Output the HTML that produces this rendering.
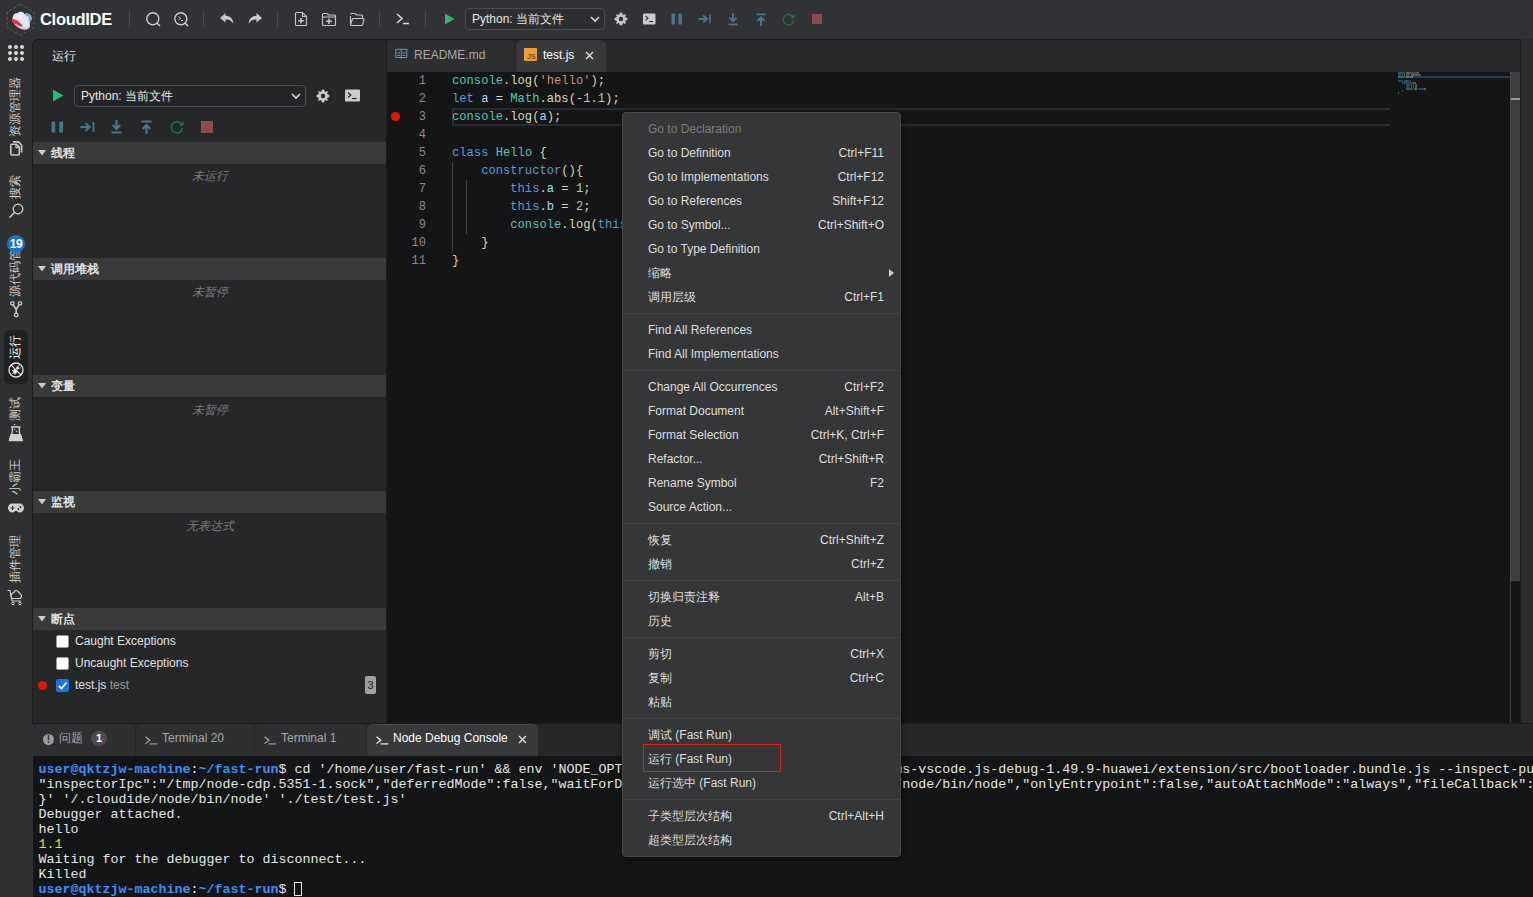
<!DOCTYPE html>
<html><head><meta charset="utf-8">
<style>
*{box-sizing:border-box;margin:0;padding:0}
html,body{width:1533px;height:897px;overflow:hidden;background:#313235;font-family:"Liberation Sans",sans-serif;color:#d0d0d0}
.a{position:absolute}
.ico{position:absolute;display:block}
.sep{position:absolute;top:11px;width:1px;height:16px;background:#4a4b4e}
.rot{position:absolute;font-size:12px;line-height:12px;white-space:nowrap;color:#cfcfcf;transform:translate(-50%,-50%) rotate(-90deg)}
.sh{position:absolute;left:33px;width:353px;height:22px;background:#393a3c}
.sh .tri{position:absolute;left:38px}
.sh span{position:absolute;left:18px;top:4px;font-size:12px;font-weight:bold;color:#e0e0e0;line-height:14px}
.empty{position:absolute;left:33px;width:353px;text-align:center;font-size:12px;font-style:italic;color:#7a7a7a}
.code{position:absolute;font-family:"Liberation Mono",monospace;font-size:12.15px;line-height:18px;white-space:pre;color:#d4d4d4}
.ln{position:absolute;font-family:"Liberation Mono",monospace;font-size:12px;line-height:18px;color:#8a8a8a;text-align:right;width:40px;left:386px}
.term{position:absolute;left:38.5px;font-family:"Liberation Mono",monospace;font-size:13.33px;line-height:15px;white-space:pre;color:#e6e6e6}
.menu{position:absolute;left:622px;top:112px;width:279px;height:745px;background:#353638;border:1px solid #48494b;border-radius:4px;box-shadow:1px 2px 6px rgba(0,0,0,.45)}
.mi{position:absolute;left:25px;right:16px;height:24px;font-size:12px;line-height:24px;color:#dedede;white-space:nowrap}
.mi b{position:absolute;right:0;top:0;font-weight:normal}
.msep{position:absolute;left:0;right:0;height:1px;background:#414244}
.k{color:#569cd6}.f{color:#dcdcaa}.t{color:#4ec9b0}.s{color:#ce9178}.v{color:#9cdcfe}.n{color:#b5cea8}.p{color:#e2d39a}
</style></head><body>
<!-- top bar -->
<div class="a" style="left:0;top:0;width:1533px;height:39px;background:#313235"></div>
<!-- logo -->
<svg class="ico" style="left:4px;top:2px" width="34" height="36" viewBox="0 0 34 36">
 <polygon points="16.5,2.2 29.9,10 29.9,25.7 16.5,33.3 3.2,25.7 3.2,10" fill="none" stroke="#5c5d60" stroke-width="0.9" stroke-dasharray="3 2"/>
 <ellipse cx="12" cy="25" rx="5.5" ry="4.5" fill="#4a2c2c" opacity=".6"/>
 <g transform="rotate(35 18 19)">
  <ellipse cx="18" cy="20.5" rx="10" ry="6" fill="#c9cde6"/>
  <ellipse cx="17" cy="18.5" rx="9.5" ry="5.5" fill="#e2e3ec"/>
  <circle cx="14" cy="15.5" r="4.2" fill="#e8e8ee"/>
  <circle cx="20.5" cy="14" r="4.8" fill="#dfe3ef"/>
  <path d="M17 11 A4.8 4.8 0 0 1 25.3 14.5 L23 15 A3 3 0 0 0 18 12.5 Z" fill="#6aa9dc"/>
 </g>
 <path d="M7.5 16.5 L13.5 18.5 L19 23.5 L17 24.8 L9 21 Z" fill="#e03a40"/>
</svg>
<div class="a" style="left:40px;top:9px;font-size:16.5px;font-weight:bold;color:#fff;line-height:20px;letter-spacing:-0.3px">CloudIDE</div>
<div class="sep" style="left:129px"></div>
<div class="sep" style="left:203px"></div>
<div class="sep" style="left:277px"></div>
<div class="sep" style="left:379px"></div>
<div class="sep" style="left:425px"></div>
<!-- toolbar icons -->
<svg class="ico" style="left:145px;top:11px" width="17" height="17" viewBox="0 0 17 17"><circle cx="7.8" cy="7.8" r="6" fill="none" stroke="#d0d0d0" stroke-width="1.4"/><path d="M12 12 L15 15" stroke="#d0d0d0" stroke-width="1.6"/></svg>
<svg class="ico" style="left:173px;top:11px" width="17" height="17" viewBox="0 0 17 17"><circle cx="7.8" cy="7.8" r="6" fill="none" stroke="#d0d0d0" stroke-width="1.4"/><path d="M12 12 L15 15" stroke="#d0d0d0" stroke-width="1.6"/><path d="M5.5 5.5 L7.5 7.3 L5.5 9" fill="none" stroke="#d0d0d0" stroke-width="1"/><path d="M8 9.5 H10" stroke="#d0d0d0" stroke-width="1"/></svg>
<svg class="ico" style="left:219px;top:12px" width="16" height="14" viewBox="0 0 16 14"><path d="M6.5 1 L1 6 L6.5 10.5 V7.5 C10 7.3 12.5 8.5 14.5 12 C14 7 11.5 4 6.5 3.8 Z" fill="#c8c8c8"/></svg>
<svg class="ico" style="left:247px;top:12px" width="16" height="14" viewBox="0 0 16 14"><path d="M9.5 1 L15 6 L9.5 10.5 V7.5 C6 7.3 3.5 8.5 1.5 12 C2 7 4.5 4 9.5 3.8 Z" fill="#c8c8c8"/></svg>
<svg class="ico" style="left:293px;top:11px" width="16" height="16" viewBox="0 0 16 16"><path d="M2.5 2.5 Q2.5 1.5 3.5 1.5 H9.5 L13.5 5.5 V13.5 Q13.5 14.5 12.5 14.5 H3.5 Q2.5 14.5 2.5 13.5 Z M9.5 1.5 V5.5 H13.5" fill="none" stroke="#c8c8c8" stroke-width="1.1"/><path d="M8 7 V12.5 M5.2 9.8 H10.8" stroke="#c8c8c8" stroke-width="1.5"/></svg>
<svg class="ico" style="left:321px;top:12px" width="16" height="15" viewBox="0 0 16 15"><path d="M1.5 2.5 Q1.5 1.5 2.5 1.5 H6 L7.5 3 H13.5 Q14.5 3 14.5 4 V12.5 Q14.5 13.5 13.5 13.5 H2.5 Q1.5 13.5 1.5 12.5 Z M1.5 5 H14.5" fill="none" stroke="#c8c8c8" stroke-width="1.1"/><path d="M8 6.5 V12 M5.2 9.2 H10.8" stroke="#c8c8c8" stroke-width="1.5"/></svg>
<svg class="ico" style="left:349px;top:12px" width="16" height="15" viewBox="0 0 16 15"><path d="M1.5 2.5 Q1.5 1.5 2.5 1.5 H6 L7.5 3 H12.5 Q13.5 3 13.5 4 V6 M1.5 12.5 V4 M1.5 12.5 Q1.5 13.5 2.5 13.5 H12.5 Q13.3 13.5 13.6 12.7 L15 7.5 Q15.2 6.5 14.2 6.5 H4.5 Q3.6 6.5 3.3 7.3 L1.6 12.5" fill="none" stroke="#c8c8c8" stroke-width="1.1"/></svg>
<svg class="ico" style="left:396px;top:13px" width="14" height="12" viewBox="0 0 14 12"><path d="M1 1 L6 5.5 L1 10" fill="none" stroke="#d8d8d8" stroke-width="1.6"/><path d="M7 10.5 H13" stroke="#d8d8d8" stroke-width="1.6"/></svg>
<svg class="ico" style="left:444px;top:13px" width="11" height="12" viewBox="0 0 11 12"><path d="M1 0.5 L10.5 6 L1 11.5 Z" fill="#2bb673"/></svg>
<div class="a" style="left:465px;top:8px;width:140px;height:22px;border:1px solid #4a4b4e;border-radius:4px;background:#2d2e30"></div>
<div class="a" style="left:472px;top:11px;font-size:12px;line-height:16px;color:#e6e6e6">Python: 当前文件</div>
<svg class="ico" style="left:590px;top:16px" width="10" height="7" viewBox="0 0 10 7"><path d="M1 1 L5 5 L9 1" fill="none" stroke="#d8d8d8" stroke-width="1.6"/></svg>
<!-- gear -->
<svg class="ico" style="left:614px;top:12px" width="14" height="14" viewBox="0 0 14 14"><path d="M7 0.5 L8.2 0.8 L8.5 2.3 L9.7 2.9 L11 2 L12 3 L11.1 4.3 L11.7 5.5 L13.2 5.8 L13.5 7 L13.2 8.2 L11.7 8.5 L11.1 9.7 L12 11 L11 12 L9.7 11.1 L8.5 11.7 L8.2 13.2 L7 13.5 L5.8 13.2 L5.5 11.7 L4.3 11.1 L3 12 L2 11 L2.9 9.7 L2.3 8.5 L0.8 8.2 L0.5 7 L0.8 5.8 L2.3 5.5 L2.9 4.3 L2 3 L3 2 L4.3 2.9 L5.5 2.3 L5.8 0.8 Z" fill="#c8c8c8"/><circle cx="7" cy="7" r="2.2" fill="#313235"/></svg>
<svg class="ico" style="left:643px;top:13px" width="13" height="12" viewBox="0 0 13 12"><rect x="0" y="0.5" width="12.5" height="11" rx="1" fill="#cccccc"/><path d="M2.5 3 L5 5.2 L2.5 7.4" fill="none" stroke="#313235" stroke-width="1.1"/><path d="M6 8.5 H10" stroke="#313235" stroke-width="1.1"/></svg>
<!-- debug icons top -->
<svg class="ico" style="left:671px;top:13px" width="12" height="12" viewBox="0 0 12 12"><rect x="0.5" y="0.5" width="3.5" height="11" rx="0.8" fill="#4a7488"/><rect x="7.5" y="0.5" width="3.5" height="11" rx="0.8" fill="#4a7488"/></svg>
<svg class="ico" style="left:698px;top:14px" width="14" height="10" viewBox="0 0 14 10"><path d="M0.5 5 H7" stroke="#4a7488" stroke-width="2"/><path d="M5 1.5 L9 5 L5 8.5" fill="none" stroke="#4a7488" stroke-width="2"/><rect x="11.3" y="0.5" width="1.6" height="9" fill="#4a7488"/></svg>
<svg class="ico" style="left:728px;top:13px" width="10" height="13" viewBox="0 0 10 13"><path d="M5 0 V7" stroke="#4a7488" stroke-width="2"/><path d="M1.5 4.5 L5 8 L8.5 4.5" fill="none" stroke="#4a7488" stroke-width="2"/><rect x="0.5" y="10.5" width="9" height="1.8" fill="#4a7488"/></svg>
<svg class="ico" style="left:756px;top:13px" width="10" height="13" viewBox="0 0 10 13"><rect x="0.5" y="0.5" width="9" height="1.8" fill="#4a7488"/><path d="M5 5 V13" stroke="#4a7488" stroke-width="2"/><path d="M1.5 8 L5 4.5 L8.5 8" fill="none" stroke="#4a7488" stroke-width="2"/></svg>
<svg class="ico" style="left:782px;top:13px" width="13" height="13" viewBox="0 0 13 13"><path d="M11 4.2 A5.2 5.2 0 1 0 11.6 7.5" fill="none" stroke="#1d7049" stroke-width="1.5"/><path d="M12.5 0.8 V5.2 H8.2 Z" fill="#1d7049"/></svg>
<div class="a" style="left:812px;top:14px;width:10px;height:10px;background:#8a4a52"></div>

<!-- activity bar -->
<div class="a" style="left:0;top:39px;width:32px;height:858px;background:#2f3032"></div>
<svg class="ico" style="left:7px;top:44px" width="18" height="18" viewBox="0 0 18 18" fill="#d8d8d8"><circle cx="3" cy="3" r="2"/><circle cx="9" cy="3" r="2"/><circle cx="15" cy="3" r="2"/><circle cx="3" cy="9" r="2"/><circle cx="9" cy="9" r="2"/><circle cx="15" cy="9" r="2"/><circle cx="3" cy="15" r="2"/><circle cx="9" cy="15" r="2"/><circle cx="15" cy="15" r="2"/></svg>
<div class="rot" style="left:15px;top:107px">资源管理器</div>
<svg class="ico" style="left:9px;top:140px" width="14" height="16" viewBox="0 0 14 16"><path d="M4 1.9 H9.5 L12.6 5 V12.5" fill="none" stroke="#c8c8c8" stroke-width="1.6"/><path d="M1.8 5 Q1.8 4.2 2.6 4.2 H7.3 L10.3 7.2 V14 Q10.3 15 9.3 15 H2.8 Q1.8 15 1.8 14 Z" fill="none" stroke="#c8c8c8" stroke-width="1.6"/><path d="M7 4.5 V7.6 H10" fill="none" stroke="#c8c8c8" stroke-width="1.2"/></svg>
<div class="rot" style="left:15px;top:187px">搜索</div>
<svg class="ico" style="left:8px;top:203px" width="16" height="16" viewBox="0 0 16 16"><circle cx="10" cy="6" r="4.8" fill="none" stroke="#d0d0d0" stroke-width="1.3"/><path d="M6.5 9.5 L1.5 14.5" stroke="#d0d0d0" stroke-width="1.5"/></svg>
<div class="rot" style="left:15px;top:267px">源代码管理</div>
<div class="a" style="left:7px;top:235px;width:18px;height:18px;border-radius:50%;background:#1a73c8;color:#fff;font-size:12px;font-weight:bold;line-height:18px;text-align:center;letter-spacing:-0.3px">19</div>
<svg class="ico" style="left:9px;top:300px" width="14" height="18" viewBox="0 0 14 18"><circle cx="3.3" cy="3.3" r="1.7" fill="none" stroke="#c8c8c8" stroke-width="1.3"/><circle cx="11" cy="3.3" r="1.7" fill="none" stroke="#c8c8c8" stroke-width="1.3"/><circle cx="7.2" cy="15" r="1.8" fill="none" stroke="#c8c8c8" stroke-width="1.3"/><path d="M4.3 4.8 L7.2 9.5 L10 4.8 M7.2 9.5 V13.2" fill="none" stroke="#c8c8c8" stroke-width="1.6"/></svg>
<div class="a" style="left:4px;top:330px;width:24px;height:54px;background:#202123;border-radius:5px"></div>
<div class="rot" style="left:15px;top:347px;color:#fff">运行</div>
<svg class="ico" style="left:8px;top:362px" width="16" height="16" viewBox="0 0 16 16"><circle cx="8" cy="8" r="7" fill="none" stroke="#e8e8e8" stroke-width="1.3"/><path d="M3.2 3.2 L12.8 12.8" stroke="#e8e8e8" stroke-width="1.2"/><ellipse cx="7" cy="9.5" rx="2" ry="2.5" fill="#e8e8e8"/><path d="M9 5 L11.5 3.5 M10 6.5 L12.5 6 M4 8 L5 9 M4.5 11.5 L5.5 10.8 M7 12.8 L7.2 12" stroke="#e8e8e8" stroke-width="0.9"/><circle cx="9.5" cy="6" r="1.5" fill="#e8e8e8"/></svg>
<div class="rot" style="left:15px;top:409px">测试</div>
<svg class="ico" style="left:8px;top:424px" width="16" height="18" viewBox="0 0 16 18"><circle cx="6.5" cy="0.8" r="0.7" fill="#d0d0d0"/><path d="M3 3 H12.5 M4.3 3 V8 L1.3 16.6 H14.3 L11.3 8 V3" fill="none" stroke="#d0d0d0" stroke-width="1.3" stroke-linejoin="round"/><path d="M2.6 10 H13 L14.8 17 H0.8 Z" fill="#d0d0d0"/><circle cx="6.5" cy="5.5" r="0.7" fill="#d0d0d0"/><circle cx="8.5" cy="7.5" r="0.7" fill="#d0d0d0"/></svg>
<div class="rot" style="left:15px;top:477px">小霸王</div>
<svg class="ico" style="left:8px;top:503px" width="16" height="10" viewBox="0 0 16 10"><path d="M4.5 0.5 H11.5 A4.5 4.5 0 0 1 11.5 9.5 Q10 9.5 9 8 H7 Q6 9.5 4.5 9.5 A4.5 4.5 0 0 1 4.5 0.5 Z" fill="#d0d0d0"/><path d="M2.5 5 H6.5 M4.5 3 V7" stroke="#2f3032" stroke-width="1.1"/><circle cx="10.5" cy="6" r="1" fill="#2f3032"/><circle cx="12.5" cy="4" r="1" fill="#2f3032"/></svg>
<div class="rot" style="left:15px;top:559px">插件管理</div>
<svg class="ico" style="left:7px;top:589px" width="17" height="17" viewBox="0 0 17 17"><path d="M0.5 1.5 H3 L5 12 H14" fill="none" stroke="#d0d0d0" stroke-width="1.1"/><circle cx="6" cy="14.5" r="1.3" fill="none" stroke="#d0d0d0"/><circle cx="13" cy="14.5" r="1.3" fill="none" stroke="#d0d0d0"/><path d="M4.5 9.5 H13 Q15.5 8 14 5.5 Q12 3.5 10.5 2 Q8 0.5 7 3.5 Q4 4 4 7 Z" fill="none" stroke="#d0d0d0" stroke-width="1.1"/></svg>

<!-- side panel -->
<div class="a" style="left:32px;top:39px;width:355px;height:685px;background:#1b1c1e;border-radius:6px 0 0 0"></div>
<div class="a" style="left:33px;top:40px;width:353px;height:683px;background:#262729;border-radius:5px 0 0 0"></div>
<div class="a" style="left:52px;top:50px;font-size:12px;line-height:13px;color:#e8e8e8">运行</div>
<svg class="ico" style="left:52px;top:89px" width="12" height="13" viewBox="0 0 12 13"><path d="M1 0.5 L11.5 6.5 L1 12.5 Z" fill="#2bb673"/></svg>
<div class="a" style="left:74px;top:85px;width:232px;height:22px;border:1px solid #4a4b4e;border-radius:4px;background:#242527"></div>
<div class="a" style="left:81px;top:88px;font-size:12px;line-height:16px;color:#e6e6e6">Python: 当前文件</div>
<svg class="ico" style="left:291px;top:93px" width="10" height="7" viewBox="0 0 10 7"><path d="M1 1 L5 5 L9 1" fill="none" stroke="#d8d8d8" stroke-width="1.6"/></svg>
<svg class="ico" style="left:316px;top:89px" width="14" height="14" viewBox="0 0 14 14"><path d="M7 0.5 L8.2 0.8 L8.5 2.3 L9.7 2.9 L11 2 L12 3 L11.1 4.3 L11.7 5.5 L13.2 5.8 L13.5 7 L13.2 8.2 L11.7 8.5 L11.1 9.7 L12 11 L11 12 L9.7 11.1 L8.5 11.7 L8.2 13.2 L7 13.5 L5.8 13.2 L5.5 11.7 L4.3 11.1 L3 12 L2 11 L2.9 9.7 L2.3 8.5 L0.8 8.2 L0.5 7 L0.8 5.8 L2.3 5.5 L2.9 4.3 L2 3 L3 2 L4.3 2.9 L5.5 2.3 L5.8 0.8 Z" fill="#c8c8c8"/><circle cx="7" cy="7" r="2.2" fill="#262729"/></svg>
<svg class="ico" style="left:345px;top:89px" width="15" height="13" viewBox="0 0 15 13"><rect x="0" y="0.5" width="15" height="12" rx="1" fill="#cccccc"/><path d="M3 3.5 L5.8 6 L3 8.5" fill="none" stroke="#262729" stroke-width="1.2"/><path d="M7 9.5 H11.5" stroke="#262729" stroke-width="1.2"/></svg>
<!-- side debug icons -->
<svg class="ico" style="left:51px;top:121px" width="13" height="12" viewBox="0 0 13 12"><rect x="0.5" y="0.5" width="3.8" height="11" rx="0.9" fill="#4a7488"/><rect x="8.3" y="0.5" width="3.8" height="11" rx="0.9" fill="#4a7488"/></svg>
<svg class="ico" style="left:80px;top:121px" width="15" height="12" viewBox="0 0 15 12"><path d="M0.5 6 H8" stroke="#4a7488" stroke-width="2.2"/><path d="M5.5 2 L9.5 6 L5.5 10" fill="none" stroke="#4a7488" stroke-width="2.2"/><rect x="12.5" y="1" width="1.8" height="10" fill="#4a7488"/></svg>
<svg class="ico" style="left:111px;top:120px" width="11" height="14" viewBox="0 0 11 14"><path d="M5.5 0 V8" stroke="#4a7488" stroke-width="2.2"/><path d="M1.8 5 L5.5 8.8 L9.2 5" fill="none" stroke="#4a7488" stroke-width="2.2"/><rect x="0.5" y="11.5" width="10" height="2" fill="#4a7488"/></svg>
<svg class="ico" style="left:141px;top:120px" width="11" height="14" viewBox="0 0 11 14"><rect x="0.5" y="0.5" width="10" height="2" fill="#4a7488"/><path d="M5.5 5.5 V14" stroke="#4a7488" stroke-width="2.2"/><path d="M1.8 8.8 L5.5 5 L9.2 8.8" fill="none" stroke="#4a7488" stroke-width="2.2"/></svg>
<svg class="ico" style="left:170px;top:120px" width="14" height="14" viewBox="0 0 14 14"><path d="M11.8 4.5 A5.6 5.6 0 1 0 12.5 8" fill="none" stroke="#1d7049" stroke-width="1.6"/><path d="M13.5 1 V5.8 H8.8 Z" fill="#1d7049"/></svg>
<div class="a" style="left:201px;top:121px;width:12px;height:12px;background:#8a4a52"></div>

<!-- sections -->
<div class="sh" style="top:142px"><svg class="tri" style="position:absolute;left:5px;top:8px" width="8" height="6" viewBox="0 0 8 6"><path d="M0 0 H8 L4 5.5 Z" fill="#cfcfcf"/></svg><span>线程</span></div>
<div class="empty" style="top:169px;line-height:14px">未运行</div>
<div class="sh" style="top:258px"><svg class="tri" style="position:absolute;left:5px;top:8px" width="8" height="6" viewBox="0 0 8 6"><path d="M0 0 H8 L4 5.5 Z" fill="#cfcfcf"/></svg><span>调用堆栈</span></div>
<div class="empty" style="top:285px;line-height:14px">未暂停</div>
<div class="sh" style="top:375px"><svg class="tri" style="position:absolute;left:5px;top:8px" width="8" height="6" viewBox="0 0 8 6"><path d="M0 0 H8 L4 5.5 Z" fill="#cfcfcf"/></svg><span>变量</span></div>
<div class="empty" style="top:403px;line-height:14px">未暂停</div>
<div class="sh" style="top:491px"><svg class="tri" style="position:absolute;left:5px;top:8px" width="8" height="6" viewBox="0 0 8 6"><path d="M0 0 H8 L4 5.5 Z" fill="#cfcfcf"/></svg><span>监视</span></div>
<div class="empty" style="top:519px;line-height:14px">无表达式</div>
<div class="sh" style="top:608px"><svg class="tri" style="position:absolute;left:5px;top:8px" width="8" height="6" viewBox="0 0 8 6"><path d="M0 0 H8 L4 5.5 Z" fill="#cfcfcf"/></svg><span>断点</span></div>
<!-- breakpoints -->
<div class="a" style="left:56px;top:635px;width:13px;height:13px;background:#fff;border:1px solid #9a9a9a;border-radius:2px"></div>
<div class="a" style="left:75px;top:633px;font-size:12px;line-height:16px;color:#e0e0e0">Caught Exceptions</div>
<div class="a" style="left:56px;top:657px;width:13px;height:13px;background:#fff;border:1px solid #9a9a9a;border-radius:2px"></div>
<div class="a" style="left:75px;top:655px;font-size:12px;line-height:16px;color:#e0e0e0">Uncaught Exceptions</div>
<div class="a" style="left:38px;top:681px;width:9px;height:9px;background:#e51400;border-radius:50%"></div>
<svg class="ico" style="left:56px;top:679px" width="13" height="13" viewBox="0 0 13 13"><rect width="13" height="13" rx="2" fill="#1a73e8"/><path d="M2.8 6.8 L5.5 9.5 L10.5 3.5" fill="none" stroke="#fff" stroke-width="1.8"/></svg>
<div class="a" style="left:75px;top:677px;font-size:12px;line-height:16px;color:#e0e0e0">test.js <span style="color:#9a9a9a">test</span></div>
<div class="a" style="left:365px;top:676px;width:11px;height:18px;background:#a0a0a0;border-radius:2px;color:#1e1e1e;font-size:11px;line-height:18px;text-align:center">3</div>

<!-- editor -->
<div class="a" style="left:386px;top:39px;width:1135px;height:685px;background:#1b1c1e"></div>
<div class="a" style="left:387px;top:40px;width:1133px;height:32px;background:#28292b"></div>
<div class="a" style="left:387px;top:72px;width:1133px;height:651px;background:#141517"></div>
<div class="a" style="left:1521px;top:39px;width:12px;height:685px;background:#2a2b2d"></div>
<!-- tabs -->
<div class="a" style="left:387px;top:40px;width:128px;height:32px;background:#2d2e30;border-radius:6px 6px 0 0"></div>
<svg class="ico" style="left:395px;top:48px" width="13" height="12" viewBox="0 0 13 12"><path d="M0.8 1.3 H11.8 V9.5 H0.8 Z M6.3 1.3 V10.8" fill="none" stroke="#5a9bc4" stroke-width="1"/><path d="M2.3 5 H5 M7.6 5 H10.3 M2.3 7.5 H5 M7.6 7.5 H10.3" stroke="#5a9bc4" stroke-width="1"/></svg>
<div class="a" style="left:414px;top:47px;font-size:12px;line-height:16px;color:#a8a8a8">README.md</div>
<div class="a" style="left:516px;top:40px;width:90px;height:32px;background:#38393b;border-radius:6px 6px 0 0"></div>
<div class="a" style="left:524px;top:48px;width:13px;height:13px;background:#f0a030;border-radius:1px"></div>
<div class="a" style="left:527px;top:53px;font-size:7px;line-height:8px;color:#7a4a10;font-weight:bold">JS</div>
<div class="a" style="left:543px;top:47px;font-size:12px;line-height:16px;color:#ffffff">test.js</div>
<svg class="ico" style="left:585px;top:51px" width="9" height="9" viewBox="0 0 9 9"><path d="M1 1 L8 8 M8 1 L1 8" stroke="#e0e0e0" stroke-width="1.4"/></svg>

<!-- code -->
<div class="a" style="left:452px;top:108px;width:938px;height:18px;border:2px solid #2a2b2d;border-right:none"></div>
<div class="a" style="left:391px;top:112px;width:9px;height:9px;background:#e51400;border-radius:50%"></div>
<div class="ln" style="top:72px">1<br>2<br>3<br>4<br>5<br>6<br>7<br>8<br>9<br>10<br>11</div>
<div class="a" style="left:452px;top:162px;width:1px;height:90px;background:#404142"></div>
<div class="a" style="left:466px;top:180px;width:1px;height:54px;background:#404142"></div>
<div class="code" style="left:452px;top:72px"><span class="t">console</span>.<span class="f">log</span><span class="p">(</span><span class="s">'hello'</span><span class="p">)</span>;
<span class="k">let</span> <span class="v">a</span> = <span class="t">Math</span>.<span class="f">abs</span><span class="p">(</span>-<span class="n">1.1</span><span class="p">)</span>;
<span class="t">console</span>.<span class="f">log</span><span class="p">(</span><span class="v">a</span><span class="p">)</span>;

<span class="k">class</span> <span class="t">Hello</span> <span class="p">{</span>
    <span class="k">constructor</span><span class="p">(){</span>
        <span class="k">this</span>.<span class="v">a</span> = <span class="n">1</span>;
        <span class="k">this</span>.<span class="v">b</span> = <span class="n">2</span>;
        <span class="t">console</span>.<span class="f">log</span><span class="p">(</span><span class="k">this</span>
    <span class="p">}</span>
<span class="p">}</span></div>
<!-- minimap / scrollbar -->
<div class="a" style="left:1398px;top:76px;width:112px;height:2px;background:#1f3d5c"></div>
<div class="a" style="left:1398px;top:72px;width:7px;height:2px;background:#3f9e8c;opacity:.5"></div><div class="a" style="left:1406px;top:72px;width:3px;height:2px;background:#b0b08a;opacity:.5"></div><div class="a" style="left:1409px;top:72px;width:1px;height:2px;background:#b0a070;opacity:.5"></div><div class="a" style="left:1410px;top:72px;width:7px;height:2px;background:#a8765f;opacity:.5"></div><div class="a" style="left:1417px;top:72px;width:2px;height:2px;background:#999;opacity:.5"></div>
<div class="a" style="left:1398px;top:74px;width:3px;height:2px;background:#3f6f9f;opacity:.5"></div><div class="a" style="left:1402px;top:74px;width:1px;height:2px;background:#7fb0cc;opacity:.5"></div><div class="a" style="left:1404px;top:74px;width:1px;height:2px;background:#999;opacity:.5"></div><div class="a" style="left:1406px;top:74px;width:4px;height:2px;background:#3f9e8c;opacity:.5"></div><div class="a" style="left:1411px;top:74px;width:3px;height:2px;background:#b0b08a;opacity:.5"></div><div class="a" style="left:1414px;top:74px;width:7px;height:2px;background:#8fa080;opacity:.5"></div>
<div class="a" style="left:1398px;top:76px;width:7px;height:2px;background:#3f9e8c;opacity:.5"></div><div class="a" style="left:1406px;top:76px;width:3px;height:2px;background:#b0b08a;opacity:.5"></div><div class="a" style="left:1410px;top:76px;width:1px;height:2px;background:#7fb0cc;opacity:.5"></div><div class="a" style="left:1411px;top:76px;width:2px;height:2px;background:#999;opacity:.5"></div>
<div class="a" style="left:1398px;top:80px;width:5px;height:2px;background:#3f6f9f;opacity:.5"></div><div class="a" style="left:1404px;top:80px;width:5px;height:2px;background:#3f9e8c;opacity:.5"></div><div class="a" style="left:1410px;top:80px;width:1px;height:2px;background:#999;opacity:.5"></div>
<div class="a" style="left:1402px;top:82px;width:11px;height:2px;background:#3f6f9f;opacity:.5"></div><div class="a" style="left:1413px;top:82px;width:3px;height:2px;background:#a09070;opacity:.5"></div>
<div class="a" style="left:1406px;top:84px;width:4px;height:2px;background:#3f6f9f;opacity:.5"></div><div class="a" style="left:1411px;top:84px;width:1px;height:2px;background:#7fb0cc;opacity:.5"></div><div class="a" style="left:1413px;top:84px;width:1px;height:2px;background:#999;opacity:.5"></div><div class="a" style="left:1415px;top:84px;width:2px;height:2px;background:#8fa080;opacity:.5"></div>
<div class="a" style="left:1406px;top:86px;width:4px;height:2px;background:#3f6f9f;opacity:.5"></div><div class="a" style="left:1411px;top:86px;width:1px;height:2px;background:#7fb0cc;opacity:.5"></div><div class="a" style="left:1413px;top:86px;width:1px;height:2px;background:#999;opacity:.5"></div><div class="a" style="left:1415px;top:86px;width:2px;height:2px;background:#8fa080;opacity:.5"></div>
<div class="a" style="left:1406px;top:88px;width:7px;height:2px;background:#3f9e8c;opacity:.5"></div><div class="a" style="left:1414px;top:88px;width:3px;height:2px;background:#b0b08a;opacity:.5"></div><div class="a" style="left:1418px;top:88px;width:6px;height:2px;background:#3f6f9f;opacity:.5"></div><div class="a" style="left:1424px;top:88px;width:2px;height:2px;background:#999;opacity:.5"></div>
<div class="a" style="left:1402px;top:90px;width:1px;height:2px;background:#999;opacity:.5"></div>
<div class="a" style="left:1398px;top:92px;width:1px;height:2px;background:#999;opacity:.5"></div>
<div class="a" style="left:1510px;top:72px;width:10px;height:651px;background:#141517;border-left:1px solid #3a3b3d"></div>
<div class="a" style="left:1510px;top:72px;width:10px;height:509px;background:#3d3e40;border-left:1px solid #4a4b4d"></div>
<div class="a" style="left:1511px;top:98px;width:9px;height:2px;background:#9a9a9a"></div>

<!-- bottom panel -->
<div class="a" style="left:32px;top:723px;width:1501px;height:1px;background:#1b1c1e"></div>
<div class="a" style="left:33px;top:724px;width:1500px;height:32px;background:#262729"></div>
<div class="a" style="left:33px;top:756px;width:1500px;height:141px;background:#141517"></div>
<div class="a" style="left:33px;top:724px;width:102px;height:32px;background:#2e2f31;border-radius:6px 6px 0 0"></div>
<div class="a" style="left:136px;top:724px;width:118px;height:32px;background:#2e2f31;border-radius:6px 6px 0 0"></div>
<div class="a" style="left:255px;top:724px;width:111px;height:32px;background:#2e2f31;border-radius:6px 6px 0 0"></div>
<div class="a" style="left:367px;top:724px;width:171px;height:32px;background:#38393b;border-top:1px solid #48494b;border-radius:6px 6px 0 0"></div>
<div class="a" style="left:43px;top:734px;width:11px;height:11px;background:#9a9a9a;border-radius:50%;color:#2e2f31;font-size:10px;font-weight:bold;line-height:11px;text-align:center">!</div>
<div class="a" style="left:59px;top:730px;font-size:12px;line-height:16px;color:#a8a8a8">问题</div>
<div class="a" style="left:91px;top:731px;width:16px;height:15px;background:#4a4b4d;border-radius:8px;color:#fff;font-size:11px;font-weight:bold;line-height:15px;text-align:center">1</div>
<svg class="ico" style="left:145px;top:736px" width="14" height="9" viewBox="0 0 14 9"><path d="M0.6 0.8 L4.8 4.2 L0.6 7.6" fill="none" stroke="#a8a8a8" stroke-width="1.2"/><path d="M4.5 7.9 H12.3" stroke="#a8a8a8" stroke-width="1.1"/></svg>
<div class="a" style="left:162px;top:730px;font-size:12px;line-height:16px;color:#a8a8a8">Terminal 20</div>
<svg class="ico" style="left:264px;top:736px" width="14" height="9" viewBox="0 0 14 9"><path d="M0.6 0.8 L4.8 4.2 L0.6 7.6" fill="none" stroke="#a8a8a8" stroke-width="1.2"/><path d="M4.5 7.9 H12.3" stroke="#a8a8a8" stroke-width="1.1"/></svg>
<div class="a" style="left:281px;top:730px;font-size:12px;line-height:16px;color:#a8a8a8">Terminal 1</div>
<svg class="ico" style="left:376px;top:736px" width="14" height="9" viewBox="0 0 14 9"><path d="M0.6 0.8 L4.8 4.2 L0.6 7.6" fill="none" stroke="#ffffff" stroke-width="1.2"/><path d="M4.5 7.9 H12.3" stroke="#ffffff" stroke-width="1.1"/></svg>
<div class="a" style="left:393px;top:730px;font-size:12px;line-height:16px;color:#ffffff">Node Debug Console</div>
<svg class="ico" style="left:518px;top:735px" width="9" height="9" viewBox="0 0 9 9"><path d="M1 1 L8 8 M8 1 L1 8" stroke="#e0e0e0" stroke-width="1.4"/></svg>
<!-- terminal -->
<div class="term" style="top:762px"><b style="color:#3d8ef8">user@qktzjw-machine</b>:<b style="color:#3d8ef8">~/fast-run</b>$ cd '/home/user/fast-run' &amp;&amp; env 'NODE_OPTIONS=--require /.cloudide/plugins/ms-vscode.js-debug-1.49.9-huawei/extension/src/bootloader.bundle.js --inspect-publish-uid=none'
"inspectorIpc":"/tmp/node-cdp.5351-1.sock","deferredMode":false,"waitForDebugger":"","execPath":"/.cloudide/node/bin/node","onlyEntrypoint":false,"autoAttachMode":"always","fileCallback":"/tmp/x"
}' '/.cloudide/node/bin/node' './test/test.js'
Debugger attached.
hello
<span style="color:#e5e510">1.1</span>
Waiting for the debugger to disconnect...
Killed
<b style="color:#3d8ef8">user@qktzjw-machine</b>:<b style="color:#3d8ef8">~/fast-run</b>$ <span style="display:inline-block;width:8px;height:14px;border:1px solid #e6e6e6;vertical-align:-3px"></span></div>

<!-- context menu -->
<div class="menu">
 <div class="mi" style="top:4px;color:#7c7c7c">Go to Declaration</div>
 <div class="mi" style="top:28px">Go to Definition<b>Ctrl+F11</b></div>
 <div class="mi" style="top:52px">Go to Implementations<b>Ctrl+F12</b></div>
 <div class="mi" style="top:76px">Go to References<b>Shift+F12</b></div>
 <div class="mi" style="top:100px">Go to Symbol...<b>Ctrl+Shift+O</b></div>
 <div class="mi" style="top:124px">Go to Type Definition</div>
 <div class="mi" style="top:148px">缩略<b style="right:-10px"><svg width="5" height="8" viewBox="0 0 5 8"><path d="M0 0 L5 4 L0 8 Z" fill="#cfcfcf"/></svg></b></div>
 <div class="mi" style="top:172px">调用层级<b>Ctrl+F1</b></div>
 <div class="msep" style="top:200px"></div>
 <div class="mi" style="top:205px">Find All References</div>
 <div class="mi" style="top:229px">Find All Implementations</div>
 <div class="msep" style="top:257px"></div>
 <div class="mi" style="top:262px">Change All Occurrences<b>Ctrl+F2</b></div>
 <div class="mi" style="top:286px">Format Document<b>Alt+Shift+F</b></div>
 <div class="mi" style="top:310px">Format Selection<b>Ctrl+K, Ctrl+F</b></div>
 <div class="mi" style="top:334px">Refactor...<b>Ctrl+Shift+R</b></div>
 <div class="mi" style="top:358px">Rename Symbol<b>F2</b></div>
 <div class="mi" style="top:382px">Source Action...</div>
 <div class="msep" style="top:410px"></div>
 <div class="mi" style="top:415px">恢复<b>Ctrl+Shift+Z</b></div>
 <div class="mi" style="top:439px">撤销<b>Ctrl+Z</b></div>
 <div class="msep" style="top:467px"></div>
 <div class="mi" style="top:472px">切换归责注释<b>Alt+B</b></div>
 <div class="mi" style="top:496px">历史</div>
 <div class="msep" style="top:524px"></div>
 <div class="mi" style="top:529px">剪切<b>Ctrl+X</b></div>
 <div class="mi" style="top:553px">复制<b>Ctrl+C</b></div>
 <div class="mi" style="top:577px">粘贴</div>
 <div class="msep" style="top:605px"></div>
 <div class="mi" style="top:610px">调试 (Fast Run)</div>
 <div class="mi" style="top:634px">运行 (Fast Run)</div>
 <div class="mi" style="top:658px">运行选中 (Fast Run)</div>
 <div class="msep" style="top:686px"></div>
 <div class="mi" style="top:691px">子类型层次结构<b>Ctrl+Alt+H</b></div>
 <div class="mi" style="top:715px">超类型层次结构</div>
</div>
<div class="a" style="left:643px;top:744px;width:138px;height:28px;border:1px solid #d91e1e"></div>
</body></html>
